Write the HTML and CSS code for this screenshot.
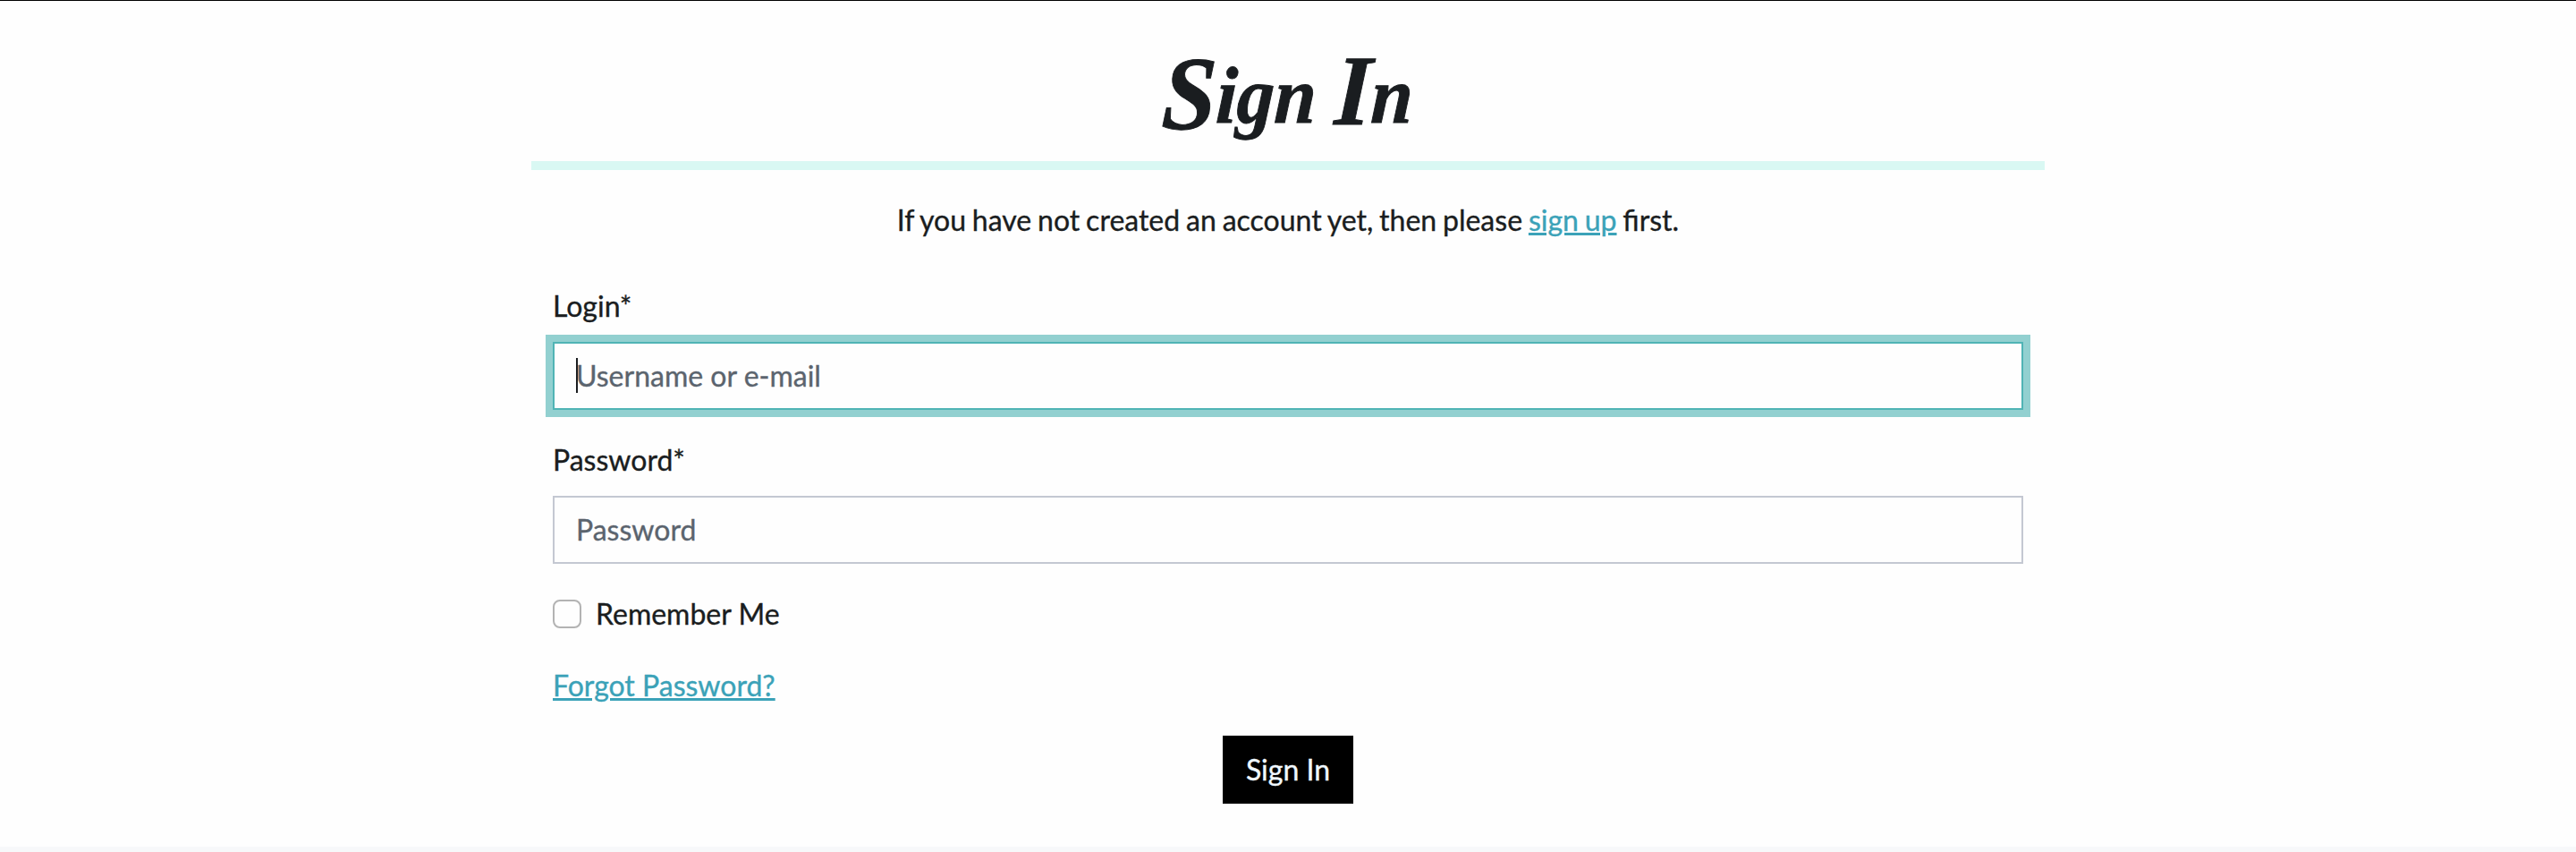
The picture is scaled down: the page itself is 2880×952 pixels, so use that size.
FILE: index.html
```html
<!DOCTYPE html>
<html lang="en">
<head>
<meta charset="utf-8">
<title>Sign In</title>
<link rel="stylesheet" href="styles.css">
</head>
<body>
<div class="topline"></div>
<main class="page">
  <h1 class="title"><span class="title-text"><span class="initial">S</span>ign <span class="initial initial-i">I</span>n</span></h1>
  <hr class="rule">
  <p class="intro">If you have not created an account yet, then please <a class="link" href="#">sign up</a> first.</p>
  <form class="form">
    <label class="label" for="login">Login*</label>
    <div class="field">
      <input class="input input-focus" id="login" type="text" placeholder="Username or e-mail">
      <span class="caret"></span>
    </div>
    <label class="label" for="password">Password*</label>
    <div class="field">
      <input class="input" id="password" type="password" placeholder="Password">
    </div>
    <label class="check"><input class="checkbox" type="checkbox"><span>Remember Me</span></label>
    <div class="forgot"><a class="link" href="#">Forgot Password?</a></div>
    <button class="button" type="button">Sign In</button>
  </form>
</main>
<footer class="footer"></footer>
</body>
</html>
```
FILE: styles.css
```css
* { box-sizing: border-box; }
body {
  margin: 0;
  height: 952px;
  overflow: hidden;
  display: flex;
  flex-direction: column;
  background: #fefefe;
  color: #1a1d20;
  font: 400 32px/48px Lato, sans-serif;
  -webkit-text-stroke: .35px currentColor;
}
.topline { height: 1px; background: #000; }
.page { width: 1692px; height: 945px; margin: 0 auto; }
.title {
  display: flex;
  justify-content: center;
  margin: 0;
  height: 179px;
  padding-top: 46px;
  font: italic 700 90px/120px "Liberation Serif", serif;
  color: #1a1d20;
  -webkit-text-stroke: 1px currentColor;
}
.title-text { height: 120px; white-space: nowrap; transform: scaleX(.93) skewX(-3deg); }
.initial { font-size: 117px; line-height: 0; vertical-align: -7px; }
.initial-i { font-size: 112px; vertical-align: -2px; }
.rule { margin: 0; border: 0; height: 10px; background: #d9f8f3; }
.intro { margin: 32px 0 48px; text-align: center; word-spacing: -1.35px; }
.link { color: #3ba2b8; text-decoration: underline; text-decoration-thickness: 3px; }
.form { display: flex; flex-direction: column; padding: 0 24px; }
.label { margin-bottom: 16px; }
.field { position: relative; height: 76px; margin-bottom: 32px; }
.input {
  display: block;
  width: 100%;
  height: 76px;
  padding: 11px 24px 13px;
  border: 2px solid #c4c8d2;
  border-radius: 0;
  background: #fefefe;
  font: inherit;
  outline: 0;
  -webkit-text-stroke: inherit;
}
.input::placeholder { color: #5b646e; opacity: 1; -webkit-text-stroke: .35px #5b646e; }
.input-focus {
  border-color: #50b4b5;
  box-shadow: 0 0 0 8px #92d0d0;
}
.caret { position: absolute; left: 26px; top: 18px; width: 2px; height: 39px; background: #1a1d20; }
.check { display: flex; align-items: center; gap: 16px; height: 48px; margin-bottom: 32px; }
.checkbox {
  appearance: none;
  margin: 0;
  width: 32px;
  height: 32px;
  border: 2px solid #b3b3b3;
  border-radius: 8px;
  background: #fefefe;
}
.forgot { height: 48px; margin-bottom: 32px; }
.button {
  align-self: center;
  width: 146px;
  height: 76px;
  padding: 0;
  border: 0;
  background: #000;
  color: #f0f8ff;
  font: inherit;
}
.footer { height: 6px; background: #f7f8fa; }
```
